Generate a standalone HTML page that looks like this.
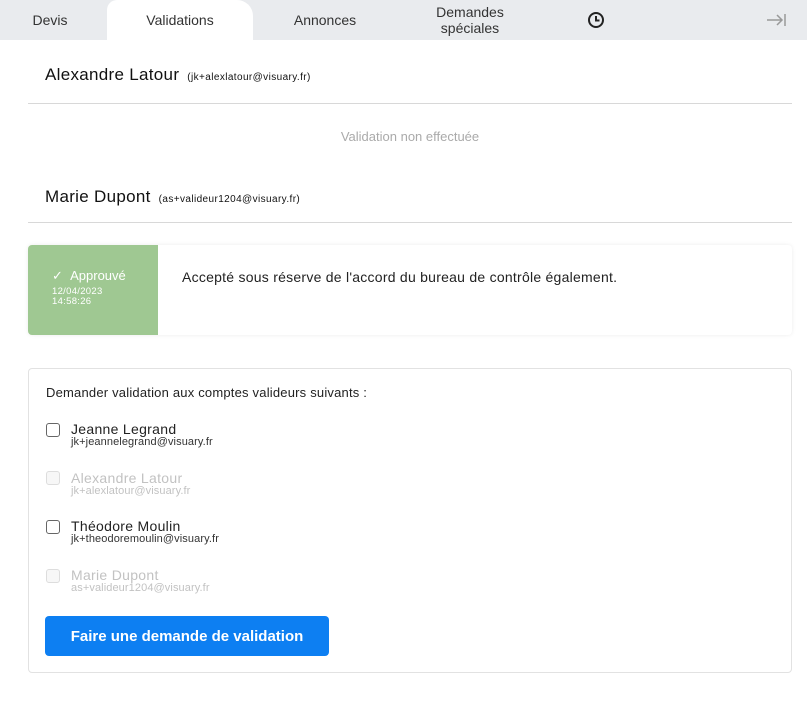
<!DOCTYPE html>
<html><head><meta charset="utf-8"><style>
*{box-sizing:border-box;margin:0;padding:0}
body{width:807px;height:706px;background:#fff;font-family:"Liberation Sans",sans-serif;color:#222;position:relative;overflow:hidden}
.bar{position:absolute;left:0;top:0;width:807px;height:40px;background:#e9ebee}
.tab{position:absolute;top:0;height:40px;display:flex;align-items:center;justify-content:center;font-size:14px;color:#333;text-align:center;line-height:16px}
.active{background:#fff;left:107px;width:146px;border-radius:10px 16px 0 0}
.abs{position:absolute}
.name{font-size:17px;color:#111;letter-spacing:0.3px}
.name small{font-size:10px;margin-left:8px;letter-spacing:0.4px}
.hr{position:absolute;left:28px;width:764px;height:1px;background:#d8d8d8}
.card{position:absolute;left:28px;width:764px;border-radius:4px;background:#fff}
.cb{position:absolute;left:46px;width:14px;height:14px;border:1.5px solid #666;border-radius:3px}
.cb.d{border-color:#ddd;background:#f7f7f7}
.nm{position:absolute;left:71px;font-size:14px;color:#222;line-height:15px;letter-spacing:0.3px}
.em{position:absolute;left:71px;font-size:11px;color:#333;line-height:12px;letter-spacing:0.1px}
.g{color:#c2c2c2}
</style></head><body>
<div class="bar">
<div class="tab" style="left:10px;width:80px">Devis</div>
<div class="tab active">Validations</div>
<div class="tab" style="left:280px;width:90px">Annonces</div>
<div class="tab" style="left:420px;width:100px">Demandes<br>spéciales</div>
<div class="tab" style="left:584px;width:24px"><svg width="18" height="18" viewBox="0 0 18 18"><circle cx="9" cy="9" r="7" fill="none" stroke="#222" stroke-width="2"/><path d="M9 5v4.5h3.5" fill="none" stroke="#222" stroke-width="2"/></svg></div>
<div class="tab" style="left:762px;width:28px"><svg width="22" height="14" viewBox="0 0 22 14"><path d="M2 7h15M12 2l5 5-5 5M20 1v12" fill="none" stroke="#999" stroke-width="1.5"/></svg></div>
</div>
<div class="abs name" style="left:45px;top:65px">Alexandre Latour<small>(jk+alexlatour@visuary.fr)</small></div>
<div class="hr" style="top:103px"></div>
<div class="abs" style="left:0;width:820px;text-align:center;top:129px;font-size:13px;color:#aaa">Validation non effectuée</div>
<div class="abs name" style="left:45px;top:187px">Marie Dupont<small>(as+valideur1204@visuary.fr)</small></div>
<div class="hr" style="top:222px"></div>
<div class="card" style="top:245px;height:90px;box-shadow:0 0 4px rgba(0,0,0,.08)">
<div class="abs" style="left:0;top:0;width:130px;height:90px;background:#9fc892;border-radius:4px 0 0 4px;color:#fff">
<div class="abs" style="left:24px;top:23px;font-size:13px">✓ &nbsp;Approuvé</div>
<div class="abs" style="left:24px;top:42px;font-size:9.5px;line-height:10px;letter-spacing:0.3px">12/04/2023<br>14:58:26</div>
</div>
<div class="abs" style="left:154px;top:24px;font-size:14px;color:#222;letter-spacing:0.25px">Accepté sous réserve de l'accord du bureau de contrôle également.</div>
</div>
<div class="card" style="top:368px;height:305px;border:1px solid #e2e2e2"></div>
<div class="abs" style="left:46px;top:385px;font-size:13px;letter-spacing:0.2px">Demander validation aux comptes valideurs suivants :</div>
<div class="cb" style="top:423px"></div><div class="nm" style="top:422px">Jeanne Legrand</div><div class="em" style="top:436px">jk+jeannelegrand@visuary.fr</div>
<div class="cb d" style="top:471px"></div><div class="nm g" style="top:471px">Alexandre Latour</div><div class="em g" style="top:485px">jk+alexlatour@visuary.fr</div>
<div class="cb" style="top:520px"></div><div class="nm" style="top:519px">Théodore Moulin</div><div class="em" style="top:533px">jk+theodoremoulin@visuary.fr</div>
<div class="cb d" style="top:569px"></div><div class="nm g" style="top:568px">Marie Dupont</div><div class="em g" style="top:582px">as+valideur1204@visuary.fr</div>
<div class="abs" style="left:45px;top:616px;width:284px;height:40px;background:#0d7ff2;border-radius:4px;color:#fff;font-size:15px;font-weight:bold;display:flex;align-items:center;justify-content:center">Faire une demande de validation</div>
</body></html>
